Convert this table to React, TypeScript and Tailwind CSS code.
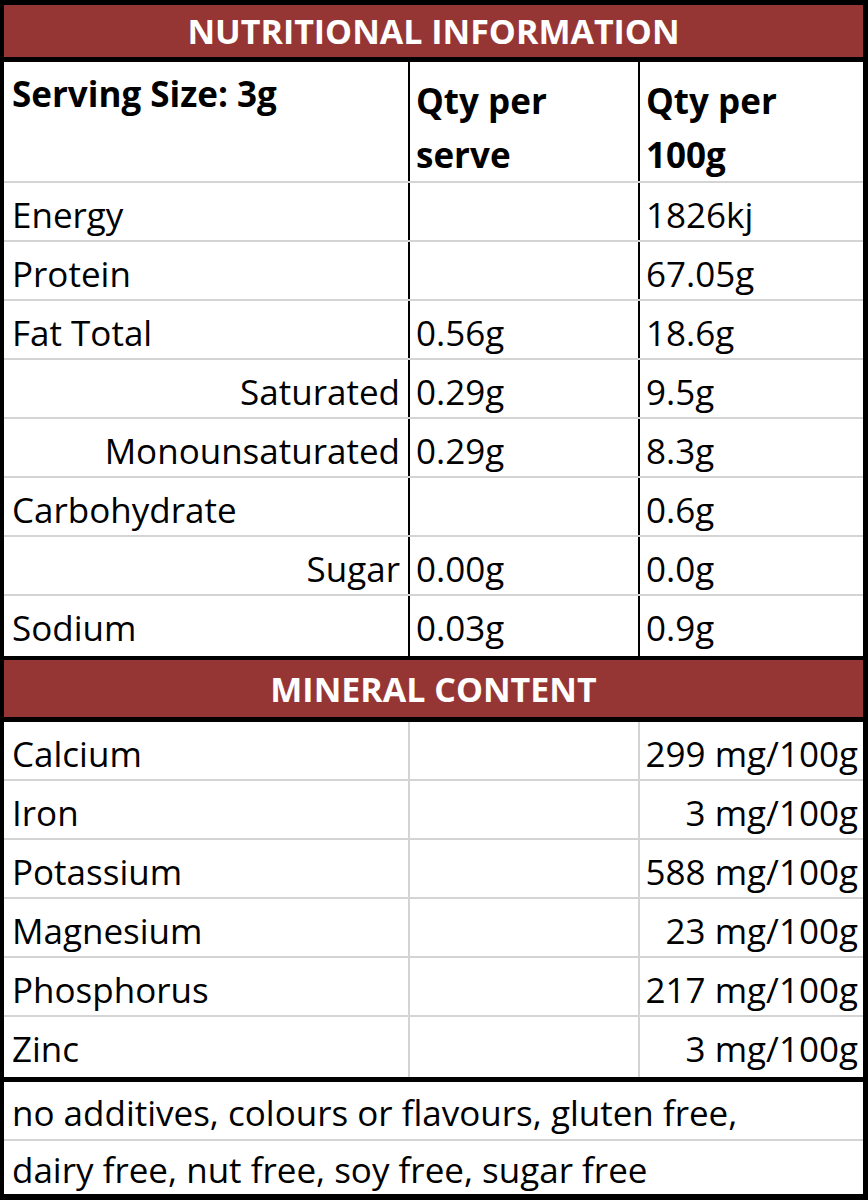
const nutrition = [
  { label: "Energy", serve: "", per100: "1826kj" },
  { label: "Protein", serve: "", per100: "67.05g" },
  { label: "Fat Total", serve: "0.56g", per100: "18.6g" },
  { label: "Saturated", serve: "0.29g", per100: "9.5g", sub: true },
  { label: "Monounsaturated", serve: "0.29g", per100: "8.3g", sub: true },
  { label: "Carbohydrate", serve: "", per100: "0.6g" },
  { label: "Sugar", serve: "0.00g", per100: "0.0g", sub: true },
  { label: "Sodium", serve: "0.03g", per100: "0.9g" },
];

const minerals = [
  { label: "Calcium", value: "299 mg/100g" },
  { label: "Iron", value: "3 mg/100g" },
  { label: "Potassium", value: "588 mg/100g" },
  { label: "Magnesium", value: "23 mg/100g" },
  { label: "Phosphorus", value: "217 mg/100g" },
  { label: "Zinc", value: "3 mg/100g" },
];

function Banner({ title }: { title: string }) {
  return (
    <div className="flex h-[57px] items-center justify-center bg-[#963634] pt-[2px] text-[34px] font-bold text-white">
      {title}
    </div>
  );
}

export default function App() {
  return (
    <div
      className="h-[1200px] w-[868px] border-t-[5px] border-r-[5px] border-b-[6px] border-l-4 border-black bg-white text-[35px] leading-[59px] text-black"
      style={{ fontFamily: "'Open Sans', Lato, sans-serif" }}
    >
      <div className="flex h-[52px] items-center justify-center bg-[#963634] text-[34px] font-bold text-white">
        NUTRITIONAL INFORMATION
      </div>
      <div className="h-[5px] bg-black" />

      {/* column heads */}
      <div className="flex h-[121px] border-b-2 border-[#d4d4d4] font-bold leading-[54px]">
        <div className="w-[404px] pt-[5px] pl-2">Serving Size: 3g</div>
        <div className="w-[230px] border-l-2 border-black pt-[12px] pl-[6px]">
          Qty per
          <br />
          serve
        </div>
        <div className="w-[225px] border-l-2 border-black pt-[12px] pl-[6px]">
          Qty per
          <br />
          100g
        </div>
      </div>

      {nutrition.map((row, i) => (
        <div
          key={row.label}
          className={
            i === nutrition.length - 1
              ? "flex h-[60px] pt-[2px]"
              : "flex h-[59px] border-b-2 border-[#d4d4d4] pt-[2px]"
          }
        >
          <div className={row.sub ? "w-[404px] pr-2 text-right" : "w-[404px] pl-2"}>
            {row.label}
          </div>
          <div className="-mt-[2px] w-[230px] border-l-2 border-black pt-[2px] pl-[6px]">
            {row.serve}
          </div>
          <div className="-mt-[2px] w-[225px] border-l-2 border-black pt-[2px] pl-[6px]">
            {row.per100}
          </div>
        </div>
      ))}

      <div className="h-[4px] bg-black" />
      <Banner title="MINERAL CONTENT" />
      <div className="h-[5px] bg-black" />

      {minerals.map((row, i) => (
        <div
          key={row.label}
          className={
            i === minerals.length - 1
              ? "flex h-[60px] pt-[2px]"
              : "flex h-[59px] border-b-2 border-[#d4d4d4] pt-[2px]"
          }
        >
          <div className="w-[404px] pl-2">{row.label}</div>
          <div className="-mt-[2px] w-[230px] border-l-2 border-[#d4d4d4]" />
          <div className="-mt-[2px] w-[225px] border-l-2 border-[#d4d4d4] pt-[2px] pr-[5px] text-right">
            {row.value}
          </div>
        </div>
      ))}

      <div className="h-[5px] bg-black" />

      <div className="h-[59px] overflow-hidden border-b-2 border-[#d4d4d4] pt-[1px] pl-2 whitespace-nowrap">
        no additives, colours or flavours, gluten free,
      </div>
      <div className="h-[53px] overflow-hidden pl-2 pt-[2px] leading-[53px] whitespace-nowrap">
        dairy free, nut free, soy free, sugar free
      </div>
    </div>
  );
}
